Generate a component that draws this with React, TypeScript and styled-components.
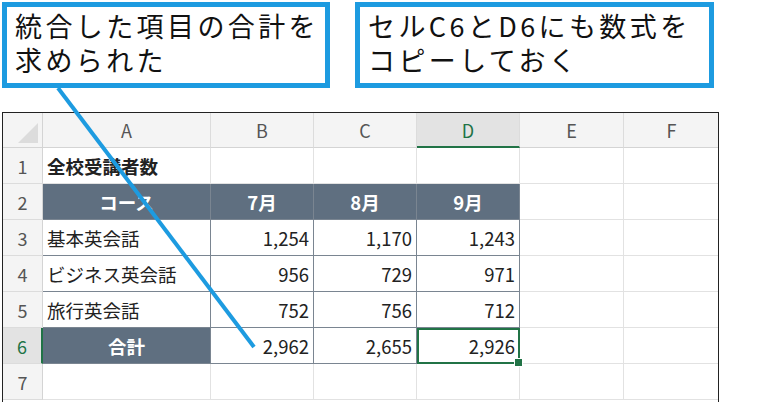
import React from "react";
import styled, { createGlobalStyle } from "styled-components";

const G = createGlobalStyle`
  body { margin: 0; background: #fff; font-family: "Noto Sans CJK JP", "Noto Sans", sans-serif; }
`;
const Page = styled.div`position: relative; width: 783px; height: 406px; overflow: hidden;`;
const Top = styled.div`display: flex; gap: 25px; padding: 2px 0 0 2px; height: 112px; box-sizing: border-box;`;
const Callout = styled.div<{ w: number }>`
  width: ${p => p.w}px; height: 86px; box-sizing: border-box; border: 5px solid #1d9be0;
  padding: 2px 8px; font-size: 27px; line-height: 34px; color: #111; letter-spacing: 3.4px; background: #fff;
  white-space: nowrap;
`;
const Sheet = styled.div`
  margin-left: 2px; width: 717px; height: 290px; box-sizing: border-box; border: 1.5px solid #222;
  border-bottom: none; display: grid; grid-template-columns: 40px 168px 103px 103px 103px 104px 96px;
  grid-template-rows: 35px repeat(7, 36px); font-family: "Noto Sans CJK JP", sans-serif; overflow: hidden;
`;
const ColH = styled.div<{ sel?: boolean }>`
  background: ${p => p.sel ? "#e3e3e3" : "#f4f4f4"}; border-right: 1px solid #dcdcdc; border-bottom: ${p => p.sel ? "2px solid #217346" : "1px solid #d4d4d4"};
  display: flex; align-items: center; justify-content: center; font-size: 18px; color: ${p => p.sel ? "#217346" : "#555"};
  box-sizing: border-box;
`;
const RowH = styled.div<{ sel?: boolean }>`
  background: ${p => p.sel ? "#e3e3e3" : "#f4f4f4"}; border-bottom: 1px solid #dcdcdc; border-right: ${p => p.sel ? "2px solid #217346" : "1px solid #d4d4d4"};
  display: flex; align-items: center; justify-content: center; font-size: 18px; color: ${p => p.sel ? "#217346" : "#555"};
  box-sizing: border-box;
`;
const Corner = styled.div`background: #f4f4f4; border-right: 1px solid #d4d4d4; border-bottom: 1px solid #d4d4d4; position: relative;
  &::after { content: ""; position: absolute; right: 4px; bottom: 4px; border-left: 20px solid transparent; border-bottom: 20px solid #dcdcdc; }`;
const Cell = styled.div<{ kind?: "head" | "data" | "plain" | "title"; align?: string; sel?: boolean }>`
  box-sizing: border-box; display: flex; align-items: center; font-size: 18.5px; color: #222; padding: 0 4px;
  justify-content: ${p => p.align || "flex-start"}; position: relative;
  border-right: 1px solid ${p => p.kind === "data" || p.kind === "head" ? "#7a8591" : "#e2e2e2"};
  border-bottom: 1px solid ${p => p.kind === "data" || p.kind === "head" ? "#7a8591" : "#e2e2e2"};
  background: ${p => p.kind === "head" ? "#5f6f80" : "#fff"};
  ${p => p.kind === "head" && "color: #fff; font-weight: bold;"}
  ${p => p.kind === "title" && "font-weight: bold;"}
  ${p => p.sel && "outline: 2px solid #217346; outline-offset: -2px;"}
`;
const Handle = styled.span`position: absolute; right: -4px; bottom: -4px; width: 7px; height: 7px; background: #217346; border: 1px solid #fff; z-index: 2;`;
const Line = styled.svg`position: absolute; left: 0; top: 0; pointer-events: none;`;

const cols = ["A", "B", "C", "D", "E", "F"];
const data = [
  ["基本英会話", "1,254", "1,170", "1,243"],
  ["ビジネス英会話", "956", "729", "971"],
  ["旅行英会話", "752", "756", "712"],
];

export default function App() {
  return (
    <Page>
      <G />
      <Top>
        <Callout w={328}>統合した項目の合計を<br />求められた</Callout>
        <Callout w={359}>セルC6とD6にも数式を<br />コピーしておく</Callout>
      </Top>
      <Sheet>
        <Corner />
        {cols.map(c => <ColH key={c} sel={c === "D"}>{c}</ColH>)}
        <RowH>1</RowH>
        <Cell kind="title">全校受講者数</Cell>
        {[0, 1, 2, 3, 4].map(i => <Cell key={i} />)}
        <RowH>2</RowH>
        <Cell kind="head" align="center">コース</Cell>
        <Cell kind="head" align="center">7月</Cell>
        <Cell kind="head" align="center">8月</Cell>
        <Cell kind="head" align="center">9月</Cell>
        <Cell /><Cell />
        {data.map((r, i) => (
          <React.Fragment key={i}>
            <RowH>{i + 3}</RowH>
            <Cell kind="data">{r[0]}</Cell>
            <Cell kind="data" align="flex-end">{r[1]}</Cell>
            <Cell kind="data" align="flex-end">{r[2]}</Cell>
            <Cell kind="data" align="flex-end">{r[3]}</Cell>
            <Cell /><Cell />
          </React.Fragment>
        ))}
        <RowH sel>6</RowH>
        <Cell kind="head" align="center">合計</Cell>
        <Cell kind="data" align="flex-end">2,962</Cell>
        <Cell kind="data" align="flex-end">2,655</Cell>
        <Cell kind="data" align="flex-end" sel>2,926<Handle /></Cell>
        <Cell /><Cell />
        <RowH>7</RowH>
        {[0, 1, 2, 3, 4, 5].map(i => <Cell key={i} />)}
      </Sheet>
      <Line width="783" height="406">
        <line x1="58" y1="88" x2="254" y2="347" stroke="#1d9be0" strokeWidth="4" />
      </Line>
    </Page>
  );
}
